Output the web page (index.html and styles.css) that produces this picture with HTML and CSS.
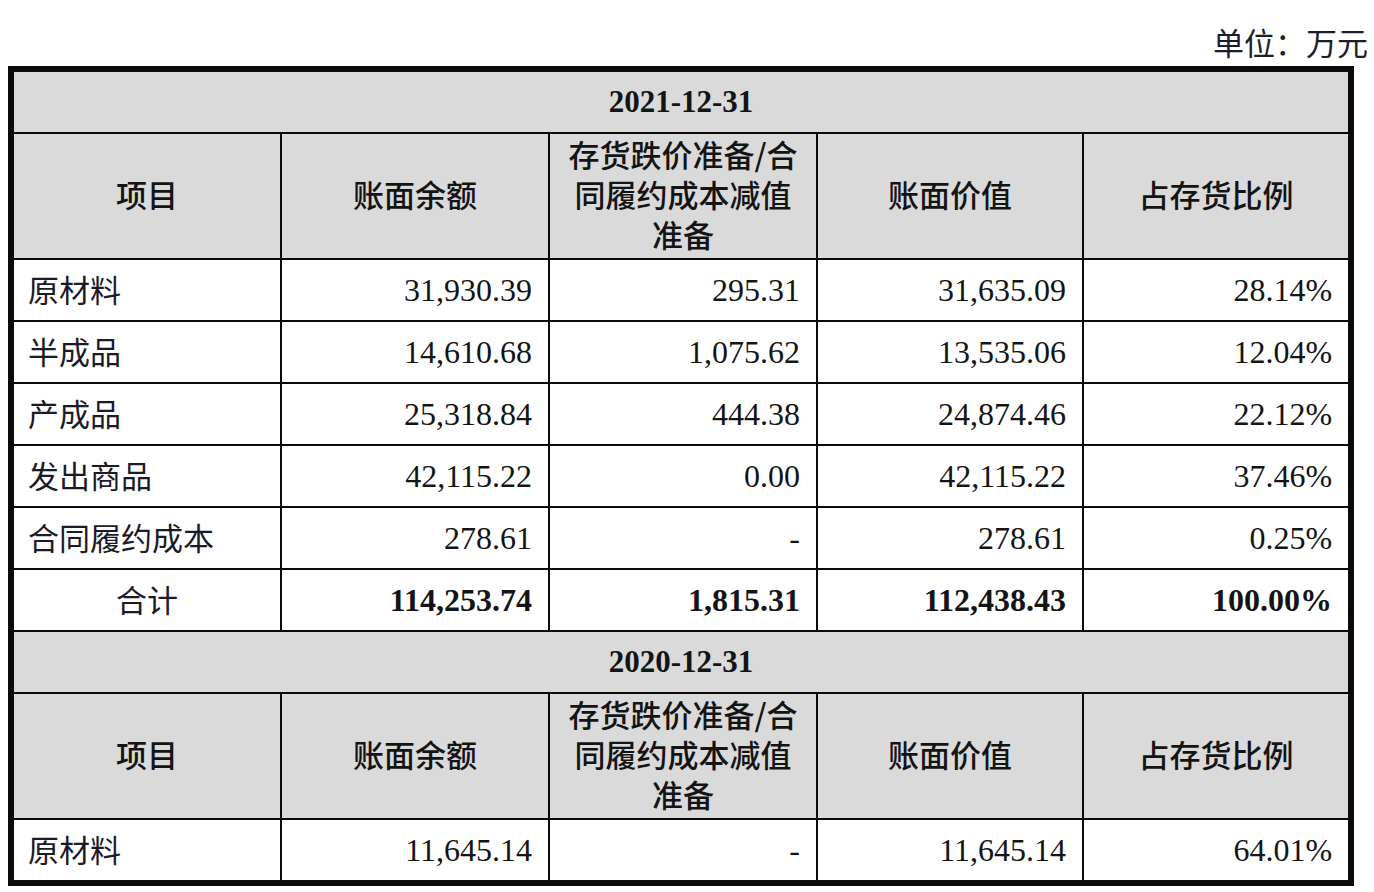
FILE: index.html
```html
<!DOCTYPE html>
<html lang="zh-CN">
<head>
<meta charset="utf-8">
<title>存货明细</title>
<link rel="stylesheet" href="styles.css">
</head>
<body>
<div class="page">
  <div class="unit">单位：万元</div>
  <div class="frame">
    <table class="grid">
      <colgroup>
        <col class="c1"><col class="c2"><col class="c3"><col class="c4"><col class="c5">
      </colgroup>
      <tbody>
        <tr class="r-title"><td colspan="5" class="date">2021-12-31</td></tr>
        <tr class="r-head">
          <td class="hd">项目</td>
          <td class="hd">账面余额</td>
          <td class="hd"><span class="ln">存货跌价准备/合</span><span class="ln">同履约成本减值</span><span class="ln">准备</span></td>
          <td class="hd">账面价值</td>
          <td class="hd">占存货比例</td>
        </tr>
        <tr class="r-data"><td class="name">原材料</td><td class="num">31,930.39</td><td class="num">295.31</td><td class="num">31,635.09</td><td class="num">28.14%</td></tr>
        <tr class="r-data"><td class="name">半成品</td><td class="num">14,610.68</td><td class="num">1,075.62</td><td class="num">13,535.06</td><td class="num">12.04%</td></tr>
        <tr class="r-data"><td class="name">产成品</td><td class="num">25,318.84</td><td class="num">444.38</td><td class="num">24,874.46</td><td class="num">22.12%</td></tr>
        <tr class="r-data"><td class="name">发出商品</td><td class="num">42,115.22</td><td class="num">0.00</td><td class="num">42,115.22</td><td class="num">37.46%</td></tr>
        <tr class="r-data"><td class="name">合同履约成本</td><td class="num">278.61</td><td class="num">-</td><td class="num">278.61</td><td class="num">0.25%</td></tr>
        <tr class="r-data r-total"><td class="name center">合计</td><td class="num bold">114,253.74</td><td class="num bold">1,815.31</td><td class="num bold">112,438.43</td><td class="num bold">100.00%</td></tr>
        <tr class="r-title"><td colspan="5" class="date">2020-12-31</td></tr>
        <tr class="r-head">
          <td class="hd">项目</td>
          <td class="hd">账面余额</td>
          <td class="hd"><span class="ln">存货跌价准备/合</span><span class="ln">同履约成本减值</span><span class="ln">准备</span></td>
          <td class="hd">账面价值</td>
          <td class="hd">占存货比例</td>
        </tr>
        <tr class="r-data r-last"><td class="name">原材料</td><td class="num">11,645.14</td><td class="num">-</td><td class="num">11,645.14</td><td class="num">64.01%</td></tr>
      </tbody>
    </table>
  </div>
</div>
</body>
</html>
```
FILE: styles.css
```css
html, body {
  margin: 0;
  padding: 0;
  background: #ffffff;
}

.page {
  width: 1360px;
  padding: 22px 0 0 8px;
}

.unit {
  text-align: right;
  font-family: "Noto Sans CJK SC", sans-serif;
  font-weight: 400;
  font-size: 31px;
  line-height: 40px;
  height: 40px;
  color: #1c1c2c;
  margin-bottom: 4px;
}

.frame {
  width: 1334px;
  border: 6px solid #0a0a0a;
}

.grid {
  width: 1334px;
  border-collapse: separate;
  border-spacing: 0;
  table-layout: fixed;
}

.c1 { width: 268px; }
.c2 { width: 268px; }
.c3 { width: 268px; }
.c4 { width: 266px; }
.c5 { width: 264px; }

.grid td {
  box-sizing: border-box;
  border-right: 2px solid #0a0a0a;
  border-bottom: 2px solid #0a0a0a;
  padding: 0;
  vertical-align: middle;
  color: #141414;
}

.grid td:last-child {
  border-right: none;
}

.r-last td {
  border-bottom: none;
}

.r-title td {
  height: 62px;
  background: #dadadb;
}

.r-head td {
  height: 126px;
  background: #dadadb;
}

.r-data td {
  height: 62px;
  background: #ffffff;
}

.r-last td {
  height: 60px;
}

.date {
  text-align: center;
  font-family: "Liberation Serif", serif;
  font-weight: 700;
  font-size: 31px;
}

.hd {
  text-align: center;
  font-family: "Noto Sans CJK SC", sans-serif;
  font-weight: 500;
  font-size: 31px;
  line-height: 40px;
  padding-bottom: 4px !important;
}

.ln {
  display: block;
  height: 40px;
  line-height: 40px;
}

.name {
  text-align: left;
  padding-left: 14px !important;
  font-family: "Noto Sans CJK SC", sans-serif;
  font-weight: 400;
  font-size: 31px;
  line-height: 40px;
  padding-bottom: 2px !important;
  color: #1a1a28 !important;
}

.name.center {
  text-align: center;
  padding-left: 0 !important;
}

.num {
  text-align: right;
  padding-right: 16px !important;
  font-family: "Liberation Serif", serif;
  font-size: 32px;
  line-height: 40px;
}

.num.bold {
  font-weight: 700;
}
```
